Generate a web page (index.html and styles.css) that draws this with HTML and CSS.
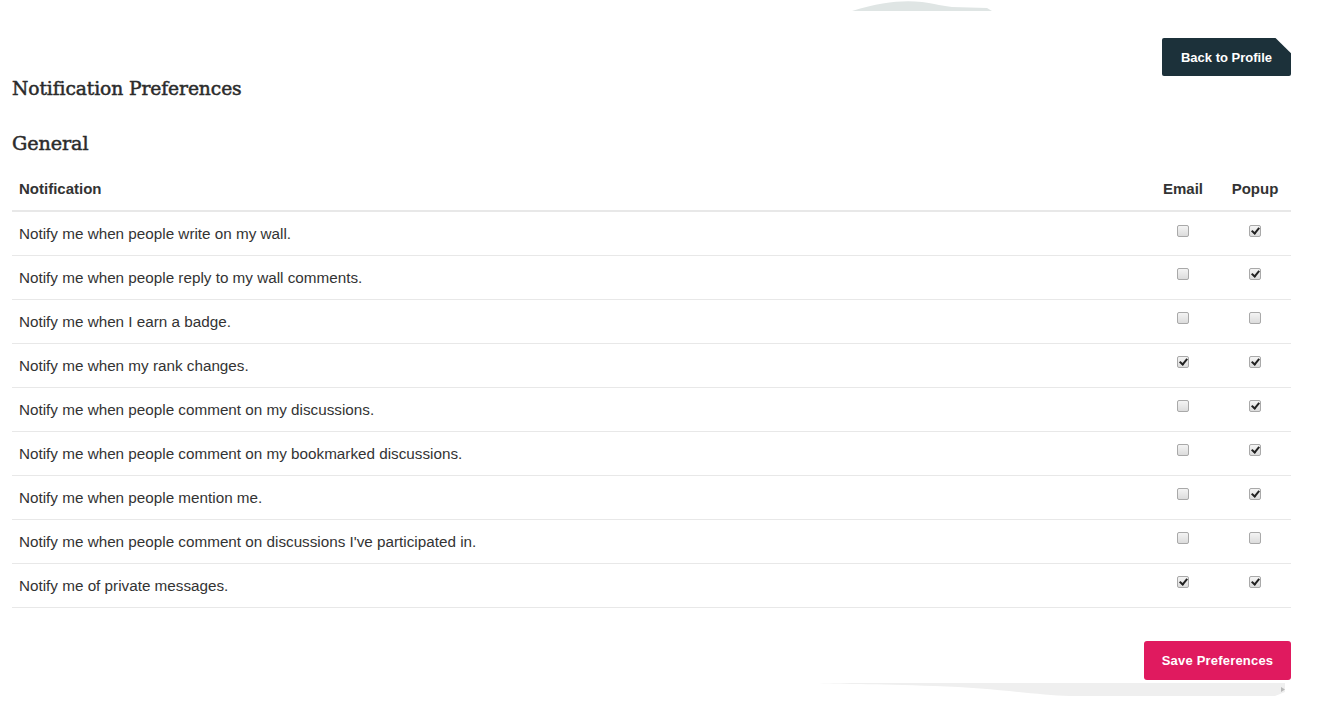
FILE: index.html
```html
<!DOCTYPE html>
<html lang="en">

<head>
    <meta charset="UTF-8">
    <meta name="viewport" content="width=device-width, initial-scale=1.0">
    <title>Notification Preferences</title>
    <link rel="stylesheet" href="styles.css">
</head>

<body>
    <svg class="deco deco-top" width="140" height="12" viewBox="0 0 140 12">
        <path d="M0 11 C 30 2, 50 0, 70 2 C 85 4, 90 6, 100 7 L 135 8 L 140 11 Z" fill="#dfe5e4" />
    </svg>

    <div class="container">
        <div class="top-actions">
            <a href="#" class="btn btn-dark">Back to Profile</a>
        </div>

        <h1 class="title">Notification Preferences</h1>
        <h2 class="subtitle">General</h2>

        <table class="prefs">
            <thead>
                <tr>
                    <th>Notification</th>
                    <th class="col">Email</th>
                    <th class="col">Popup</th>
                </tr>
            </thead>
            <tbody>
                <tr>
                    <td>Notify me when people write on my wall.</td>
                    <td class="col"><input type="checkbox"></td>
                    <td class="col"><input type="checkbox" checked></td>
                </tr>
                <tr>
                    <td>Notify me when people reply to my wall comments.</td>
                    <td class="col"><input type="checkbox"></td>
                    <td class="col"><input type="checkbox" checked></td>
                </tr>
                <tr>
                    <td>Notify me when I earn a badge.</td>
                    <td class="col"><input type="checkbox"></td>
                    <td class="col"><input type="checkbox"></td>
                </tr>
                <tr>
                    <td>Notify me when my rank changes.</td>
                    <td class="col"><input type="checkbox" checked></td>
                    <td class="col"><input type="checkbox" checked></td>
                </tr>
                <tr>
                    <td>Notify me when people comment on my discussions.</td>
                    <td class="col"><input type="checkbox"></td>
                    <td class="col"><input type="checkbox" checked></td>
                </tr>
                <tr>
                    <td>Notify me when people comment on my bookmarked discussions.</td>
                    <td class="col"><input type="checkbox"></td>
                    <td class="col"><input type="checkbox" checked></td>
                </tr>
                <tr>
                    <td>Notify me when people mention me.</td>
                    <td class="col"><input type="checkbox"></td>
                    <td class="col"><input type="checkbox" checked></td>
                </tr>
                <tr>
                    <td>Notify me when people comment on discussions I've participated in.</td>
                    <td class="col"><input type="checkbox"></td>
                    <td class="col"><input type="checkbox"></td>
                </tr>
                <tr>
                    <td>Notify me of private messages.</td>
                    <td class="col"><input type="checkbox" checked></td>
                    <td class="col"><input type="checkbox" checked></td>
                </tr>
            </tbody>
        </table>

        <div class="bottom-actions">
            <button type="button" class="btn btn-pink">Save Preferences</button>
        </div>
    </div>

    <svg class="deco deco-bottom" width="480" height="16" viewBox="0 0 480 16">
        <path d="M0 1 L 470 1 L 470 10 L 460 14 L 255 14 C 220 13, 180 6, 120 4 C 60 2, 20 2, 0 1 Z" fill="#efefef" />
        <path d="M466 5 L 470 7.5 L 466 10 Z" fill="#b8b8b8" />
    </svg>
</body>

</html>
```

FILE: styles.css
```css
* {
    margin: 0;
    padding: 0;
    box-sizing: border-box;
}
body {
    font-family: 'Liberation Sans', Arial, Helvetica, sans-serif;
    font-size: 15px;
    color: #333;
    background: #fff;
    position: relative;
    min-height: 720px;
}
.container {
    padding: 38px 30px 0 12px;
}
.top-actions,
.bottom-actions {
    display: flex;
    justify-content: flex-end;
}
.btn {
    display: inline-flex;
    align-items: center;
    justify-content: center;
    font-family: 'Liberation Sans', Arial, sans-serif;
    font-weight: bold;
    font-size: 13px;
    color: #fff;
    text-decoration: none;
    border: none;
    cursor: pointer;
}
.btn-dark {
    width: 129px;
    height: 38px;
    background: #1c313a;
    border-radius: 2px;
    clip-path: polygon(0 0, 88% 0, 100% 40%, 100% 100%, 0 100%);
}
.btn-pink {
    width: 147px;
    height: 39px;
    background: #e01a5f;
    border-radius: 3px;
    letter-spacing: 0.2px;
}
.title,
.subtitle {
    font-family: 'DejaVu Serif', Georgia, serif;
    font-weight: normal;
    line-height: 24px;
    color: #2b2b2b;
    letter-spacing: -0.1px;
    -webkit-text-stroke: 0.5px #2b2b2b;
}
.title { margin-top: 1px; font-size: 18.7px; }
.subtitle { margin-top: 31px; font-size: 19.2px; }

.prefs {
    width: 100%;
    border-collapse: collapse;
    margin-top: 11px;
}
.prefs th,
.prefs td {
    text-align: left;
    padding: 0 7px;
    height: 44px;
    vertical-align: middle;
}
.prefs th {
    font-weight: bold;
    border-bottom: 2px solid #e8e8e8;
}
.prefs td {
    border-bottom: 1px solid #e8e8e8;
    font-size: 15.25px;
}
.prefs .col {
    text-align: center;
    width: 72px;
    padding: 0;
}
.prefs td.col { padding-bottom: 8px; }

.bottom-actions { margin-top: 33px; }

input[type="checkbox"] {
    appearance: none;
    -webkit-appearance: none;
    width: 12px;
    height: 12px;
    border: 1px solid #a9a9a9;
    border-radius: 2px;
    background: linear-gradient(#f4f4f4, #dcdcdc);
    position: relative;
    vertical-align: middle;
}
input[type="checkbox"]:checked::after {
    content: '';
    position: absolute;
    left: 3px;
    top: 0px;
    width: 3px;
    height: 6px;
    border: solid #222;
    border-width: 0 2px 2px 0;
    transform: rotate(40deg);
}

.deco {
    position: absolute;
    pointer-events: none;
}
.deco-top { left: 852px; top: 0; }
.deco-bottom { left: 815px; top: 682px; }
```
